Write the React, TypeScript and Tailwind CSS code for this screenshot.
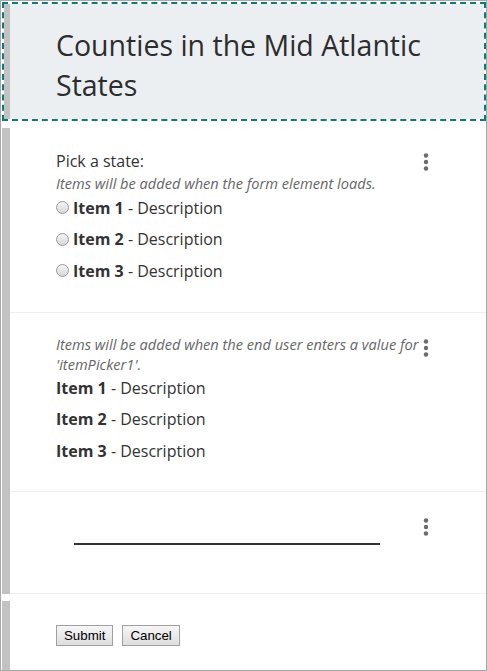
import React from "react";

function Kebab() {
  return (
    <svg width="6" height="18" viewBox="0 0 6 18" className="block">
      <circle cx="3" cy="2.5" r="2.2" fill="#6b6b6b" />
      <circle cx="3" cy="9" r="2.2" fill="#6b6b6b" />
      <circle cx="3" cy="15.5" r="2.2" fill="#6b6b6b" />
    </svg>
  );
}

function Radio() {
  return (
    <span className="inline-block w-[13px] h-[13px] rounded-full border border-[#9a9a9a] bg-gradient-to-b from-[#f4f4f4] to-[#d8d8d8] mr-[4px] shrink-0" />
  );
}

const items = ["Item 1", "Item 2", "Item 3"];

export default function App() {
  return (
    <div className="w-[487px] h-[671px] border border-[#a8a8a8] bg-white overflow-hidden font-['Open_Sans',sans-serif] text-[#333333]">
      {/* Header */}
      <div className="ml-[1px] mt-[1px] w-[484px] h-[119px] border-2 border-dashed border-[#0a7d78] flex">
        <div className="w-[6px] bg-[#c2c2c2] shrink-0" />
        <div className="flex-1 bg-[#ebeff2] pl-[46px] pt-[21px]">
          <h1 className="text-[28.5px] leading-[40px] font-normal text-[#2d2d2d]">
            Counties in the Mid Atlantic States
          </h1>
        </div>
      </div>

      <div className="h-[7px]" />

      {/* Body */}
      <div className="flex ml-[1px]">
        <div className="w-[8px] bg-[#c2c2c2] shrink-0" />
        <div className="flex-1 flex flex-col">
          {/* Section 1 */}
          <section className="relative h-[185px] border-b border-[#f0f0f0] pl-[46px] pt-[21px]">
            <div className="absolute left-[413px] top-[25px]">
              <Kebab />
            </div>
            <div className="text-[16px] leading-[24px]">Pick a state:</div>
            <div className="text-[14.6px] leading-[20px] italic text-[#666666]">
              Items will be added when the form element loads.
            </div>
            <div className="flex flex-col -mt-[1px]">
              {items.map((it) => (
                <div key={it} className="flex items-center h-[31.5px] text-[16px]">
                  <Radio />
                  <span className="font-bold">{it}</span>
                  <span>&nbsp;- Description</span>
                </div>
              ))}
            </div>
          </section>

          {/* Section 2 */}
          <section className="relative h-[179px] border-b border-[#f0f0f0] pl-[46px] pt-[21px]">
            <div className="absolute left-[413px] top-[26px]">
              <Kebab />
            </div>
            <div className="w-[372px] text-[14.6px] leading-[20px] italic text-[#666666]">
              Items will be added when the end user enters a value for 'itemPicker1'.
            </div>
            <div className="flex flex-col -mt-[2px]">
              {items.map((it) => (
                <div key={it} className="flex items-center h-[31.5px] text-[16px]">
                  <span className="font-bold">{it}</span>
                  <span>&nbsp;- Description</span>
                </div>
              ))}
            </div>
          </section>

          {/* Section 3 */}
          <section className="relative h-[102px] border-b border-[#f0f0f0]">
            <div className="absolute left-[413px] top-[26px]">
              <Kebab />
            </div>
            <div className="ml-[64px] mt-[51px] w-[306px] h-[1.5px] bg-[#333333]" />
          </section>
        </div>
      </div>

      <div className="h-[7px]" />

      {/* Buttons */}
      <div className="flex ml-[1px] h-[71px]">
        <div className="w-[8px] bg-[#c2c2c2] shrink-0" />
        <div className="flex-1 pl-[46px] pt-[24px] flex gap-[9px] items-start">
          <button className="h-[21px] px-[7px] border border-[#a0a0a0] bg-gradient-to-b from-[#f6f6f6] to-[#dedede] text-[13.3px] leading-[19px] text-black font-['Liberation_Sans',Arial,sans-serif]">
            Submit
          </button>
          <button className="h-[21px] px-[7px] border border-[#a0a0a0] bg-gradient-to-b from-[#f6f6f6] to-[#dedede] text-[13.3px] leading-[19px] text-black font-['Liberation_Sans',Arial,sans-serif]">
            Cancel
          </button>
        </div>
      </div>
    </div>
  );
}
